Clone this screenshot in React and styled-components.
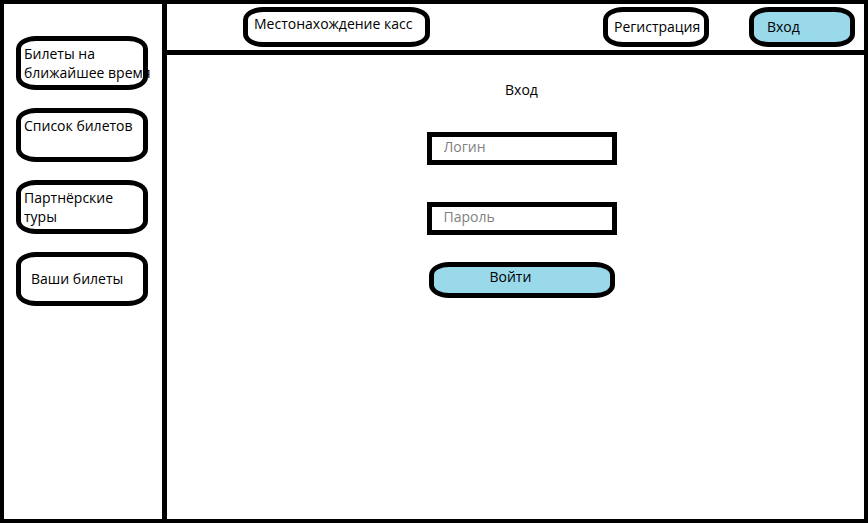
import React from "react";
import styled, { createGlobalStyle } from "styled-components";

const GlobalStyle = createGlobalStyle`
  * {
    box-sizing: border-box;
  }

  body {
    margin: 0;
    background: #fff;
    color: #000;
    font-family: "Open Sans", "Noto Sans", sans-serif;
    font-size: 14px;
    line-height: 19px;
  }

  button,
  input {
    margin: 0;
    color: inherit;
    font: inherit;
  }
`;

const Page = styled.div`
  display: grid;
  grid-template-columns: 163px minmax(0, 1fr);
  min-height: 100vh;
  border: 4px solid #000;
`;

const Sidebar = styled.nav`
  display: flex;
  flex-direction: column;
  gap: 18px;
  padding: 32px 14px 32px 12px;
  border-right: 5px solid #000;
`;

const Content = styled.div`
  display: flex;
  flex-direction: column;
`;

const Header = styled.header`
  display: flex;
  align-items: center;
  gap: 40px;
  padding: 3px 9px 3px 76px;
  border-bottom: 5px solid #000;
`;

const OutlinedButton = styled.button`
  display: flex;
  border: 5px solid #000;
  border-radius: 20px / 13px;
  background: ${({ $filled }) => ($filled ? "#99d9ea" : "#fff")};
  text-align: left;
  white-space: pre;
  cursor: pointer;
`;

const SidebarButton = styled(OutlinedButton)`
  align-items: ${({ $centered }) => ($centered ? "center" : "flex-start")};
  height: 54px;
  padding: ${({ $centered }) => ($centered ? "0 10px 2px" : "3px")};
`;

const HeaderButton = styled(OutlinedButton)`
  align-items: center;
  width: 106px;
  height: 40px;
  padding: 0 ${({ $inset }) => $inset || 6}px 2px;
`;

const LocationsButton = styled(HeaderButton)`
  align-items: flex-start;
  width: 187px;
  margin-right: auto;
  padding-top: 2px;
`;

const Main = styled.main`
  display: flex;
  flex-direction: column;
  align-items: center;
  padding: 25px 0 25px 12px;
`;

const Title = styled.h1`
  margin: 0 0 33px;
  font-size: 14px;
  font-weight: 400;
  line-height: 19px;
`;

const LoginForm = styled.form`
  display: flex;
  flex-direction: column;
  align-items: center;
`;

const Field = styled.input`
  width: 190px;
  height: 33px;
  padding: 0 12px 4px;
  border: 5px solid #000;
  border-radius: 0;
  background: #fff;

  & + & {
    margin-top: 37px;
  }

  &::placeholder {
    color: #7f7f7f;
    opacity: 1;
  }
`;

const SubmitButton = styled(OutlinedButton)`
  width: 186px;
  height: 36px;
  margin-top: 27px;
  padding: 0 56px;
`;

export default function App() {
  return (
    <>
      <GlobalStyle />
      <Page>
        <Sidebar>
          <SidebarButton type="button">{"Билеты на\nближайшее время"}</SidebarButton>
          <SidebarButton type="button">Список билетов</SidebarButton>
          <SidebarButton type="button">{"Партнёрские\nтуры"}</SidebarButton>
          <SidebarButton type="button" $centered>
            Ваши билеты
          </SidebarButton>
        </Sidebar>
        <Content>
          <Header>
            <LocationsButton type="button">Местонахождение касс</LocationsButton>
            <HeaderButton type="button">Регистрация</HeaderButton>
            <HeaderButton type="button" $filled $inset={13}>
              Вход
            </HeaderButton>
          </Header>
          <Main>
            <Title>Вход</Title>
            <LoginForm onSubmit={(event) => event.preventDefault()}>
              <Field type="text" name="login" placeholder="Логин" aria-label="Логин" />
              <Field type="password" name="password" placeholder="Пароль" aria-label="Пароль" />
              <SubmitButton type="submit" $filled>
                Войти
              </SubmitButton>
            </LoginForm>
          </Main>
        </Content>
      </Page>
    </>
  );
}
